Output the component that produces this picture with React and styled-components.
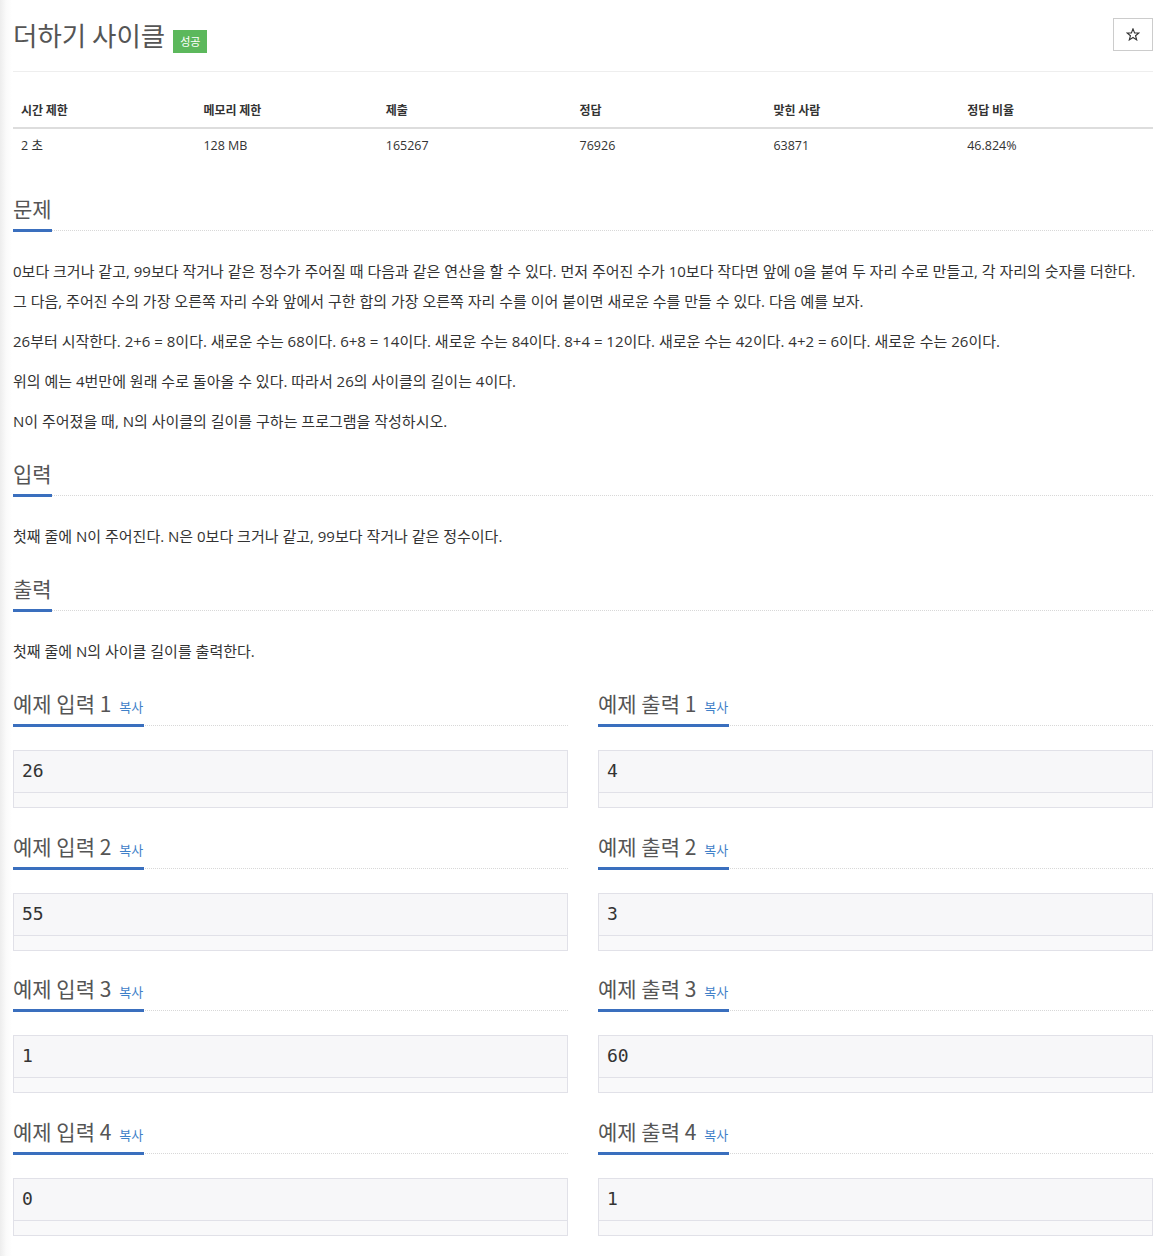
import styled, { createGlobalStyle } from "styled-components";

const GlobalStyle = createGlobalStyle`
    html, body {
        margin: 0;
        padding: 0;
        background: linear-gradient(to right, #ededed 0px, #fafafa 6px, #ffffff 12px);
        font-family: "Open Sans", "Noto Sans CJK KR", sans-serif;
        color: #333;
    }
`;

const Page = styled.div`
    width: 1140px;
    padding: 0 14px 40px 13px;
`;

const Header = styled.div`
    display: flex;
    align-items: center;
    justify-content: space-between;
    padding: 18px 0 20px;
    border-bottom: 1px solid #eee;
`;

const TitleWrap = styled.div`
    display: flex;
    align-items: flex-end;
    gap: 8px;
`;

const Title = styled.h1`
    margin: 0;
    font-family: "Noto Sans CJK KR", sans-serif;
    font-size: 26.5px;
    font-weight: 400;
    line-height: 33px;
    color: #555;
`;

const Badge = styled.span`
    display: inline-block;
    background: #5cb85c;
    color: #fff;
    font-family: "Noto Sans CJK KR", sans-serif;
    font-size: 11px;
    line-height: 23px;
    height: 23px;
    padding: 0 7px;
    margin-bottom: -2px;
`;

const StarButton = styled.button`
    display: flex;
    align-items: center;
    justify-content: center;
    width: 40px;
    height: 33px;
    background: #fff;
    border: 1px solid #ccc;
    padding: 0;
`;

const Table = styled.table`
    width: 100%;
    border-collapse: collapse;
    margin-top: 21px;
    font-family: "Noto Sans CJK KR", "Open Sans", sans-serif;
    font-size: 12px;
`;

const Th = styled.th`
    text-align: left;
    font-weight: 700;
    padding: 8px;
    line-height: 18px;
    border-bottom: 2px solid #ddd;
    width: ${(p) => p.$w};
    color: #333;
`;

const Td = styled.td`
    padding: 8px;
    line-height: 18px;
    font-family: "Open Sans", "Noto Sans CJK KR", sans-serif;
    font-size: 12.5px;
    color: #333;
`;

const Section = styled.section`
    margin-top: ${(p) => p.$top || 22}px;
`;

const Headline = styled.div`
    border-bottom: 1px dotted #d8d8d8;
`;

const HeadlineText = styled.h2`
    display: inline-flex;
    align-items: baseline;
    box-sizing: content-box;
    height: 30px;
    margin: 0 0 -2px;
    padding-bottom: 6px;
    border-bottom: 3px solid #3a6fbe;
    font-family: "Noto Sans CJK KR", sans-serif;
    font-size: 21px;
    font-weight: 400;
    line-height: 30px;
    color: #555;
    white-space: pre;
`;

const CopyLink = styled.a`
    font-size: 13px;
    line-height: 30px;
    color: #3f80c8;
    margin-left: 8px;
    padding-right: 1px;
    text-decoration: none;
`;

const Body = styled.div`
    margin-top: 25px;
    font-family: "Open Sans", "Noto Sans CJK KR", sans-serif;
    font-size: 15px;
    line-height: 30px;
    color: #333;

    p {
        margin: 0 0 10px;
    }
`;

const SampleGrid = styled.div`
    display: grid;
    grid-template-columns: 1fr 1fr;
    column-gap: 30px;
    margin-top: 22px;
`;

const Sample = styled.div`
    margin-bottom: 22.5px;
`;

const Pre = styled.div`
    margin-top: 24px;
    border: 1px solid #e1e1e8;
    background: #f7f7f9;
`;

const PreText = styled.pre`
    margin: 0;
    padding: 9px 8px 10px;
    font-family: "DejaVu Sans Mono", monospace;
    font-size: 18px;
    line-height: 22px;
    color: #333;
`;

const Scrollbar = styled.div`
    height: 14px;
    border-top: 1px solid #e1e1e8;
    background: #f9f9fa;
`;

const StarIcon = () => (
    <svg width="14" height="13" viewBox="0 0 24 23" fill="none" stroke="#333" strokeWidth="2" strokeLinejoin="miter">
        <polygon points="12,1.5 14.8,8.6 22.4,8.9 16.5,13.7 18.5,21 12,16.8 5.5,21 7.5,13.7 1.6,8.9 9.2,8.6" />
    </svg>
);

const info = [
    ["시간 제한", "2 초", "16%"],
    ["메모리 제한", "128 MB", "16%"],
    ["제출", "165267", "17%"],
    ["정답", "76926", "17%"],
    ["맞힌 사람", "63871", "17%"],
    ["정답 비율", "46.824%", "17%"],
];

const samples = [
    ["26", "4"],
    ["55", "3"],
    ["1", "60"],
    ["0", "1"],
];

const SampleBox = ({ label, value }) => (
    <Sample>
        <Headline>
            <HeadlineText>
                {label}
                <CopyLink href="#">복사</CopyLink>
            </HeadlineText>
        </Headline>
        <Pre>
            <PreText>{value}</PreText>
            <Scrollbar />
        </Pre>
    </Sample>
);

const App = () => {
    return (
        <Page>
            <GlobalStyle />
            <Header>
                <TitleWrap>
                    <Title>더하기 사이클</Title>
                    <Badge>성공</Badge>
                </TitleWrap>
                <StarButton>
                    <StarIcon />
                </StarButton>
            </Header>
            <Table>
                <thead>
                    <tr>
                        {info.map(([h, , w]) => (
                            <Th key={h} $w={w}>{h}</Th>
                        ))}
                    </tr>
                </thead>
                <tbody>
                    <tr>
                        {info.map(([h, v]) => (
                            <Td key={h}>{v}</Td>
                        ))}
                    </tr>
                </tbody>
            </Table>

            <Section $top={30}>
                <Headline>
                    <HeadlineText>문제</HeadlineText>
                </Headline>
                <Body>
                    <p>
                        0보다 크거나 같고, 99보다 작거나 같은 정수가 주어질 때 다음과 같은 연산을 할 수 있다. 먼저 주어진 수가 10보다 작다면 앞에 0을 붙여 두 자리 수로 만들고, 각 자리의 숫자를 더한다.<br />
                        그 다음, 주어진 수의 가장 오른쪽 자리 수와 앞에서 구한 합의 가장 오른쪽 자리 수를 이어 붙이면 새로운 수를 만들 수 있다. 다음 예를 보자.
                    </p>
                    <p>26부터 시작한다. 2+6 = 8이다. 새로운 수는 68이다. 6+8 = 14이다. 새로운 수는 84이다. 8+4 = 12이다. 새로운 수는 42이다. 4+2 = 6이다. 새로운 수는 26이다.</p>
                    <p>위의 예는 4번만에 원래 수로 돌아올 수 있다. 따라서 26의 사이클의 길이는 4이다.</p>
                    <p>N이 주어졌을 때, N의 사이클의 길이를 구하는 프로그램을 작성하시오.</p>
                </Body>
            </Section>

            <Section>
                <Headline>
                    <HeadlineText>입력</HeadlineText>
                </Headline>
                <Body>
                    <p>첫째 줄에 N이 주어진다. N은 0보다 크거나 같고, 99보다 작거나 같은 정수이다.</p>
                </Body>
            </Section>

            <Section>
                <Headline>
                    <HeadlineText>출력</HeadlineText>
                </Headline>
                <Body>
                    <p>첫째 줄에 N의 사이클 길이를 출력한다.</p>
                </Body>
            </Section>

            <SampleGrid>
                {samples.map(([input, output], i) => [
                    <SampleBox key={`in${i}`} label={`예제 입력 ${i + 1}`} value={input} />,
                    <SampleBox key={`out${i}`} label={`예제 출력 ${i + 1}`} value={output} />,
                ])}
            </SampleGrid>
        </Page>
    );
};

export default App;
